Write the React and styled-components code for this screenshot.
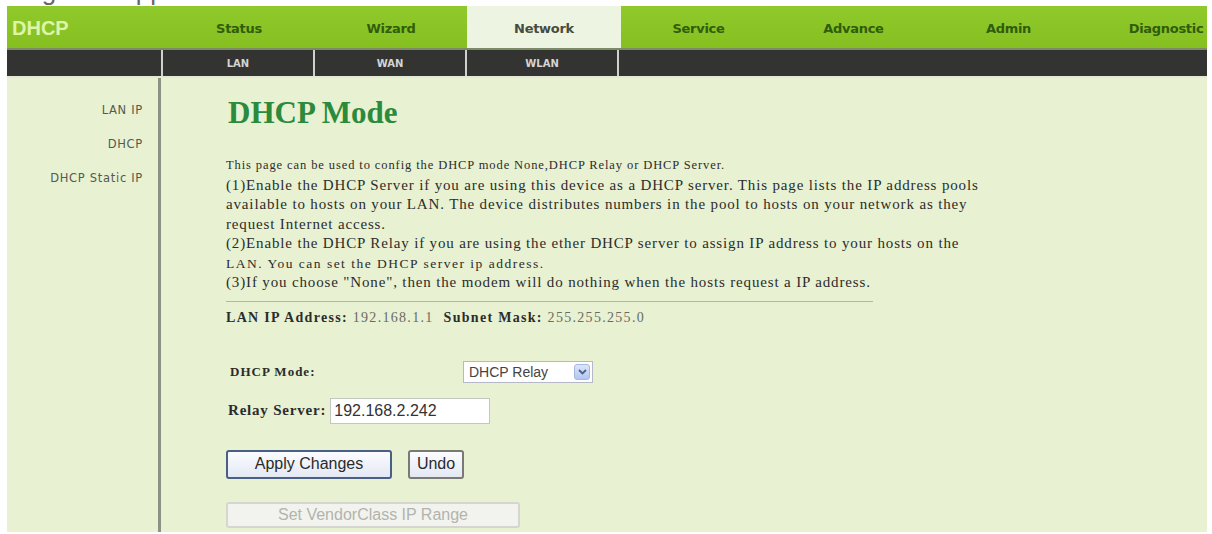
import React from 'react'
import styled, { createGlobalStyle } from 'styled-components'

const GlobalStyle = createGlobalStyle`
  html, body {
    margin: 0;
    padding: 0;
    background: #ffffff;
  }
`

const topTabs = [
  { name: 'Status', w: 152 },
  { name: 'Wizard', w: 152 },
  { name: 'Network', w: 154 },
  { name: 'Service', w: 155 },
  { name: 'Advance', w: 155 },
  { name: 'Admin', w: 155 },
  { name: 'Diagnostic', w: 160 },
]
const subTabs = ['LAN', 'WAN', 'WLAN']
const sideLinks = ['LAN IP', 'DHCP', 'DHCP Static IP']

const App = () => {
  return (
    <>
      <GlobalStyle />
      <Page>
        <CutStrip>
          <CutText>Page will appear</CutText>
        </CutStrip>
        <Frame>
          <TopBar>
            <Brand>DHCP</Brand>
            {topTabs.map((t) => (
              <TopTab key={t.name} w={t.w} active={t.name === 'Network'}>{t.name}</TopTab>
            ))}
          </TopBar>
          <SubBar>
            <SubCell />
            {subTabs.map((t) => (
              <SubCell key={t}>{t}</SubCell>
            ))}
            <SubFill />
          </SubBar>
          <Body>
            <Sidebar>
              {sideLinks.map((l) => (
                <SideLink key={l}>{l}</SideLink>
              ))}
            </Sidebar>
            <Main>
              <Title>DHCP Mode</Title>
              <Intro>
                <SmallLine>This page can be used to config the DHCP mode None,DHCP Relay or DHCP Server.</SmallLine>
                <Line>(1)Enable the DHCP Server if you are using this device as a DHCP server. This page lists the IP address pools</Line>
                <Line>available to hosts on your LAN. The device distributes numbers in the pool to hosts on your network as they</Line>
                <Line>request Internet access.</Line>
                <Line>(2)Enable the DHCP Relay if you are using the ether DHCP server to assign IP address to your hosts on the</Line>
                <MidLine>LAN. You can set the DHCP server ip address.</MidLine>
                <Line>(3)If you choose "None", then the modem will do nothing when the hosts request a IP address.</Line>
              </Intro>
              <Divider />
              <InfoRow>
                <b>LAN IP Address:</b> <InfoValue>192.168.1.1</InfoValue>
                <b>Subnet Mask:</b> <InfoValue>255.255.255.0</InfoValue>
              </InfoRow>
              <ModeRow>
                <ModeLabel>DHCP Mode:</ModeLabel>
                <SelectBox>
                  <SelectText>DHCP Relay</SelectText>
                  <SelectArrow>
                    <svg width="9" height="6" viewBox="0 0 9 6">
                      <path d="M1 1 L4.5 4.5 L8 1" stroke="#4d6185" strokeWidth="1.8" fill="none" />
                    </svg>
                  </SelectArrow>
                </SelectBox>
              </ModeRow>
              <RelayRow>
                <RelayLabel>Relay Server:</RelayLabel>
                <TextInput value="192.168.2.242" readOnly />
              </RelayRow>
              <ButtonRow>
                <Button primary>Apply Changes</Button>
                <Button small>Undo</Button>
              </ButtonRow>
              <DisabledButton disabled>Set VendorClass IP Range</DisabledButton>
            </Main>
          </Body>
        </Frame>
      </Page>
    </>
  )
}

const Page = styled.div`
  width: 1212px;
  height: 534px;
  overflow: hidden;
  background: #ffffff;
`

const CutStrip = styled.div`
  height: 6px;
  overflow: hidden;
  padding-left: 10px;
`

const CutText = styled.div`
  font-family: 'Liberation Sans', Arial, sans-serif;
  font-size: 26px;
  line-height: 26px;
  margin-top: -22px;
  color: #666;
  white-space: nowrap;
`

const Frame = styled.div`
  margin-left: 7px;
  width: 1200px;
  overflow: hidden;
  background: #f4f4ef;
`

const TopBar = styled.div`
  height: 42px;
  display: flex;
  background: linear-gradient(#90c92b, #86bf20);
  border-bottom: 2px solid #7d8a66;
`

const Brand = styled.div`
  flex: 0 0 156px;
  display: flex;
  align-items: center;
  font-family: 'Liberation Sans', Arial, sans-serif;
  font-weight: bold;
  font-size: 20px;
  color: #ddf5a8;
  padding: 2px 0 0 5px;
  box-sizing: border-box;
`

const TopTab = styled.div`
  flex: 0 0 ${(p) => p.w}px;
  display: flex;
  align-items: center;
  justify-content: center;
  font-family: 'DejaVu Sans', Verdana, sans-serif;
  font-size: 13px;
  font-weight: bold;
  letter-spacing: -0.3px;
  color: ${(p) => (p.active ? '#474c43' : '#2f5d0c')};
  background: ${(p) => (p.active ? '#eef4e2' : 'transparent')};
  padding-top: 2px;
`

const SubBar = styled.div`
  height: 26px;
  display: grid;
  grid-template-columns: 154px repeat(3, 150px) 1fr;
  column-gap: 2px;
  background: #cfd1ca;
  border-bottom: 2px solid #e4e8d8;
`

const SubCell = styled.div`
  background: #333331;
  color: #d4d4d4;
  font-family: 'DejaVu Sans', Verdana, sans-serif;
  font-size: 10px;
  font-weight: bold;
  display: flex;
  align-items: center;
  justify-content: center;
`

const SubFill = styled.div`
  background: #333331;
`

const Body = styled.div`
  height: 454px;
  display: grid;
  grid-template-columns: 154px 1fr;
  background: #e8f1d1;
`

const Sidebar = styled.div`
  border-right: 3px solid #8c9384;
  display: flex;
  flex-direction: column;
  align-items: flex-end;
  gap: 20px;
  padding: 25px 15px 0 0;
`

const SideLink = styled.div`
  font-family: 'DejaVu Sans', Verdana, sans-serif;
  font-size: 11.5px;
  line-height: 14px;
  color: #555a50;
  letter-spacing: 0.7px;
`

const Main = styled.div`
  padding: 18px 0 0 65px;
  font-family: 'Liberation Serif', 'Times New Roman', serif;
  color: #2c2c2c;
`

const Title = styled.h1`
  margin: 0 0 26px 2px;
  font-family: 'Liberation Serif', 'Times New Roman', serif;
  font-size: 31px;
  line-height: 34px;
  font-weight: bold;
  color: #2b8a3c;
`

const Intro = styled.div`
  width: 820px;
`

const Line = styled.div`
  font-size: 15px;
  line-height: 19.5px;
  letter-spacing: 0.85px;
  white-space: nowrap;
`

const SmallLine = styled(Line)`
  font-size: 12.5px;
  letter-spacing: 0.9px;
`

const MidLine = styled(Line)`
  font-size: 13.5px;
  letter-spacing: 1.5px;
`

const Divider = styled.div`
  width: 647px;
  height: 1px;
  background: #b3b7aa;
  margin: 8px 0 8px 0;
`

const InfoRow = styled.div`
  font-size: 14px;
  line-height: 16px;
  letter-spacing: 1.3px;
  color: #2c2c2c;
  white-space: nowrap;
  b {
    font-weight: bold;
  }
`

const InfoValue = styled.span`
  color: #6a6a66;
  margin-right: 10px;
`

const ModeRow = styled.div`
  display: flex;
  align-items: center;
  margin-top: 35px;
  padding-left: 4px;
`

const ModeLabel = styled.div`
  width: 233px;
  font-size: 13px;
  font-weight: bold;
  letter-spacing: 1px;
`

const SelectBox = styled.div`
  width: 130px;
  height: 22px;
  display: flex;
  align-items: center;
  justify-content: space-between;
  background: #ffffff;
  border: 1px solid #b5b9c7;
  box-sizing: border-box;
  padding: 0 2px 0 5px;
`

const SelectText = styled.span`
  font-family: 'Liberation Sans', Arial, sans-serif;
  font-size: 14px;
  color: #444;
`

const SelectArrow = styled.span`
  width: 16px;
  height: 16px;
  border-radius: 3px;
  background: linear-gradient(#dce6fb, #b3c6f2);
  border: 1px solid #a6b8e0;
  box-sizing: border-box;
  display: flex;
  align-items: center;
  justify-content: center;
`

const RelayRow = styled.div`
  display: flex;
  align-items: center;
  margin-top: 15px;
  padding-left: 2px;
`

const RelayLabel = styled.div`
  font-size: 15px;
  font-weight: bold;
  letter-spacing: 0.8px;
  margin-right: 4px;
`

const TextInput = styled.input`
  width: 160px;
  height: 26px;
  box-sizing: border-box;
  border: 1px solid #c3c7bf;
  background: #ffffff;
  font-family: 'Liberation Sans', Arial, sans-serif;
  font-size: 16px;
  color: #333;
  padding: 0 3px;
  outline: none;
`

const ButtonRow = styled.div`
  display: flex;
  gap: 16px;
  margin-top: 26px;
`

const Button = styled.button`
  width: ${(p) => (p.small ? '56px' : '166px')};
  height: 29px;
  box-sizing: border-box;
  font-family: 'Liberation Sans', Arial, sans-serif;
  font-size: 16px;
  color: #2a2a2a;
  border: ${(p) => (p.primary ? '2px solid #4a5f86' : '2px solid #7a7a74')};
  border-radius: 3px;
  background: linear-gradient(#fbfcff, #e3e8f3);
  padding: 0;
`

const DisabledButton = styled.button`
  display: block;
  margin-top: 23px;
  width: 294px;
  height: 26px;
  box-sizing: border-box;
  font-family: 'Liberation Sans', Arial, sans-serif;
  font-size: 16px;
  color: #b3b3ad;
  border: 2px solid #d4d6cf;
  border-radius: 3px;
  background: #f2f3ee;
`

export default App
